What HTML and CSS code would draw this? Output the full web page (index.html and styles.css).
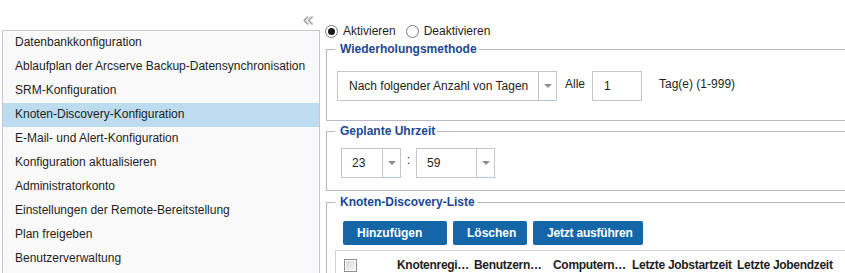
FILE: index.html
```html
<!DOCTYPE html>
<html lang="de">
<head>
    <meta charset="UTF-8">
    <title>Konfiguration</title>
    <link rel="stylesheet" href="styles.css">
</head>
<body>
    <div class="page">
        <aside class="sidebar">
            <div class="sidebar-head">
                <svg class="collapse" width="11" height="9" viewBox="0 0 11 9">
                    <path d="M5 0.5 L1 4.5 L5 8.5 M9.5 0.5 L5.5 4.5 L9.5 8.5" fill="none" stroke="#9a9a9a" stroke-width="1.3"/>
                    <path d="M7 0.5 L3 4.5 L7 8.5 M11 0.5 L7 4.5 L11 8.5" fill="none" stroke="#d2d2d2" stroke-width="1"/>
                </svg>
            </div>
            <ul class="nav">
                <li>Datenbankkonfiguration</li>
                <li>Ablaufplan der Arcserve Backup-Datensynchronisation</li>
                <li>SRM-Konfiguration</li>
                <li class="selected">Knoten-Discovery-Konfiguration</li>
                <li>E-Mail- und Alert-Konfiguration</li>
                <li>Konfiguration aktualisieren</li>
                <li>Administratorkonto</li>
                <li>Einstellungen der Remote-Bereitstellung</li>
                <li>Plan freigeben</li>
                <li>Benutzerverwaltung</li>
            </ul>
        </aside>

        <main class="main">
            <div class="radios">
                <label class="radio-item"><span class="radio checked"></span>Aktivieren</label>
                <label class="radio-item"><span class="radio"></span>Deaktivieren</label>
            </div>

            <fieldset class="group group-repeat">
                <legend>Wiederholungsmethode</legend>
                <div class="row">
                    <div class="combo combo-method">
                        <span class="combo-value">Nach folgender Anzahl von Tagen</span>
                        <span class="trigger"></span>
                    </div>
                    <span class="label-alle">Alle</span>
                    <div class="field field-days">1</div>
                    <span class="label-range">Tag(e) (1-999)</span>
                </div>
            </fieldset>

            <fieldset class="group group-time">
                <legend>Geplante Uhrzeit</legend>
                <div class="row">
                    <div class="combo combo-hour">
                        <span class="combo-value">23</span>
                        <span class="trigger"></span>
                    </div>
                    <span class="colon">:</span>
                    <div class="combo combo-minute">
                        <span class="combo-value">59</span>
                        <span class="trigger"></span>
                    </div>
                </div>
            </fieldset>

            <fieldset class="group group-list">
                <legend>Knoten-Discovery-Liste</legend>
                <div class="toolbar">
                    <button class="btn btn-add">Hinzufügen</button>
                    <button class="btn btn-delete">Löschen</button>
                    <button class="btn btn-run">Jetzt ausführen</button>
                </div>
                <div class="grid">
                    <div class="grid-head">
                        <div class="cell cell-check"><span class="checkbox"></span></div>
                        <div class="cell col-node">Knotenregi…</div>
                        <div class="cell col-user">Benutzern…</div>
                        <div class="cell col-comp">Computern…</div>
                        <div class="cell col-start">Letzte Jobstartzeit</div>
                        <div class="cell col-end">Letzte Jobendzeit</div>
                    </div>
                </div>
            </fieldset>
        </main>
    </div>
</body>
</html>
```

FILE: styles.css
```css
:root {
    --text: #1e1e1e;
    --legend: #1a4893;
    --fieldset-border: #b5b8c8;
    --input-border: #c6c6c6;
    --button: #1466a8;
    --selected: #bddcef;
}

* {
    box-sizing: border-box;
}

body {
    margin: 0;
    overflow: hidden;
    background-color: #fff;
    color: var(--text);
    font-family: "Liberation Sans", Arial, sans-serif;
    font-size: 12px;
}

.page {
    display: flex;
    width: 900px;
    height: 273px;
}

/* left navigation */

.sidebar {
    flex: 0 0 320px;
    display: flex;
    flex-direction: column;
}

.sidebar-head {
    height: 30px;
    display: flex;
    justify-content: flex-end;
    align-items: flex-end;
    padding: 0 6px 5px 0;
}

.collapse {
    display: block;
}

.nav {
    list-style: none;
    margin: 0 0 0 2px;
    padding: 0;
    flex: 1;
    border: 1px solid #c5c7d3;
    border-bottom: none;
    background-color: #f9f9f9;
}

.nav li {
    height: 24px;
    line-height: 23px;
    padding-left: 12px;
    white-space: nowrap;
}

.nav li.selected {
    background-color: var(--selected);
}

/* right side */

.main {
    flex: 1;
    min-width: 0;
    padding: 23px 0 0 5px;
}

.radios {
    display: flex;
    align-items: center;
    gap: 10px;
    height: 16px;
}

.radio-item {
    display: flex;
    align-items: center;
    gap: 5px;
}

.radio {
    width: 13px;
    height: 13px;
    border: 1px solid #7a7a7a;
    border-radius: 50%;
    background-color: #fff;
    display: flex;
    align-items: center;
    justify-content: center;
}

.radio.checked::after {
    content: "";
    width: 7px;
    height: 7px;
    border-radius: 50%;
    background-color: #1a1a1a;
}

.group {
    width: 600px;
    margin: 3px 0 0 1px;
    padding: 0 8px;
    border: 1px solid var(--fieldset-border);
    min-width: 0;
}

.group legend {
    padding: 0 2px 0 5px;
    font-weight: bold;
    line-height: 14px;
    color: var(--legend);
}

.group-repeat {
    padding-top: 15px;
    padding-bottom: 19px;
}

.group-time {
    margin-top: 3px;
    padding-top: 10px;
    padding-bottom: 12px;
}

.group-list {
    margin-top: 4px;
    padding-top: 12px;
    padding-bottom: 0;
    border-bottom: none;
}

.row {
    display: flex;
    align-items: center;
}

.combo {
    display: flex;
    height: 30px;
    border: 1px solid var(--input-border);
    background-color: #fff;
}

.combo-value {
    flex: 1;
    line-height: 28px;
    padding-left: 11px;
    white-space: nowrap;
}

.trigger {
    width: 18px;
    border-left: 1px solid var(--input-border);
    border-bottom: 1px solid #a9c8ea;
    margin-bottom: -1px;
    display: flex;
    align-items: center;
    justify-content: center;
}

.trigger::after {
    content: "";
    border-left: 4px solid transparent;
    border-right: 4px solid transparent;
    border-top: 4px solid #8e8e8e;
}

.combo-method {
    width: 220px;
    margin-left: 2px;
}

.label-alle {
    margin: -4px 0 0 8px;
}

.field {
    width: 50px;
    height: 30px;
    margin-left: 7px;
    border: 1px solid var(--input-border);
    line-height: 28px;
    padding-left: 11px;
}

.label-range {
    margin: -4px 0 0 17px;
}

.combo-hour {
    width: 60px;
    margin-left: 6px;
}

.combo-minute {
    width: 79px;
}

.colon {
    width: 15px;
    text-align: center;
    margin-top: -6px;
}

.combo-hour .combo-value,
.combo-minute .combo-value {
    padding-left: 10px;
}

.toolbar {
    display: flex;
    gap: 6px;
    margin-left: 8px;
}

.btn {
    height: 24px;
    padding: 0 0 0 14px;
    border: none;
    border-radius: 2px;
    background-color: var(--button);
    color: #fff;
    font-family: inherit;
    font-size: 12px;
    font-weight: bold;
    text-align: left;
    white-space: nowrap;
}

.btn-add {
    width: 104px;
}

.btn-delete {
    width: 74px;
}

.btn-run {
    width: 110px;
    letter-spacing: -0.2px;
}

.grid {
    margin-top: 5px;
    border-top: 1px solid #d0d0d0;
    border-left: 1px solid #d0d0d0;
}

.grid-head {
    display: flex;
    align-items: center;
    height: 28px;
    font-weight: bold;
    letter-spacing: -0.3px;
}

.cell {
    flex-shrink: 0;
    padding-left: 6px;
    white-space: nowrap;
}

.cell-check {
    width: 55px;
    padding-left: 8px;
    display: flex;
}

.checkbox {
    width: 13px;
    height: 13px;
    border: 1px solid #8d8d8d;
    background: linear-gradient(135deg, #d8d8d8, #f6f6f6);
    box-shadow: inset 0 0 0 1px #fff;
}

.col-node { width: 77px; }
.col-user { width: 79px; }
.col-comp { width: 79px; }
.col-start { width: 105px; }
.col-end { width: 100px; }
```
